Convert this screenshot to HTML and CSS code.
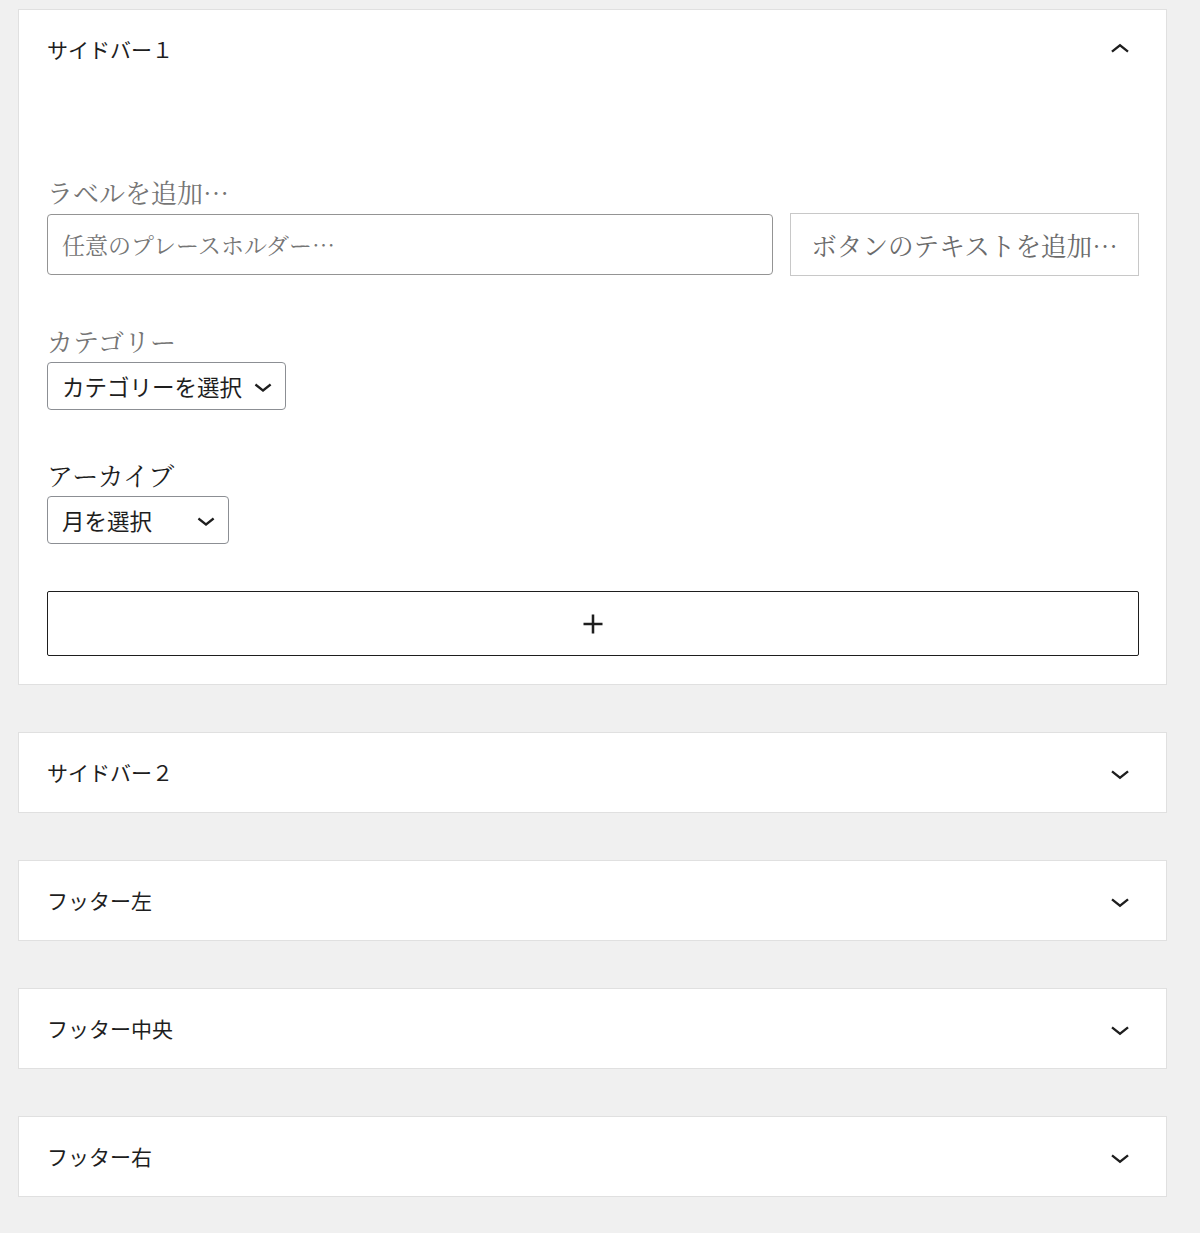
FILE: index.html
```html
<!DOCTYPE html>
<html lang="ja">
  <head>
    <meta charset="utf-8" />
    <title>ウィジェット</title>
    <meta name="viewport" content="width=device-width,initial-scale=1" />
    <link rel="stylesheet" href="styles.css">
  </head>
  <body>
    <div class="w-areas">
      <!-- Open widget area -->
      <section class="w-panel w-panel--open">
        <div class="w-panel__head">
          <h2 class="w-panel__title">サイドバー１</h2>
          <svg class="w-panel__icon" viewBox="0 0 24 24"><path d="M6.5 12.4L12 8l5.5 4.4-.9 1.2L12 10l-4.6 3.6-1-1.2z"/></svg>
        </div>
        <div class="w-panel__body">
          <div class="w-block w-search">
            <div class="w-label w-label--muted">ラベルを追加…</div>
            <div class="w-search__row">
              <div class="w-search__input">任意のプレースホルダー…</div>
              <div class="w-search__button">ボタンのテキストを追加…</div>
            </div>
          </div>

          <div class="w-block">
            <div class="w-label w-label--muted">カテゴリー</div>
            <div class="w-select w-select--cats">
              <span>カテゴリーを選択</span>
              <svg viewBox="0 0 24 24"><path d="M17.5 11.6L12 16l-5.5-4.4.9-1.2L12 14l4.6-3.6 1 1.2z"/></svg>
            </div>
          </div>

          <div class="w-block">
            <div class="w-label">アーカイブ</div>
            <div class="w-select w-select--months">
              <span>月を選択</span>
              <svg viewBox="0 0 24 24"><path d="M17.5 11.6L12 16l-5.5-4.4.9-1.2L12 14l4.6-3.6 1 1.2z"/></svg>
            </div>
          </div>

          <div class="w-block">
            <div class="w-add">
              <svg viewBox="0 0 24 24"><path d="M18 11.2h-5.2V6h-1.6v5.2H6v1.6h5.2V18h1.6v-5.2H18z"/></svg>
            </div>
          </div>
        </div>
      </section>

      <!-- Collapsed widget areas -->
      <section class="w-panel">
        <div class="w-panel__head">
          <h2 class="w-panel__title">サイドバー２</h2>
          <svg class="w-panel__icon" viewBox="0 0 24 24"><path d="M17.5 11.6L12 16l-5.5-4.4.9-1.2L12 14l4.6-3.6 1 1.2z"/></svg>
        </div>
      </section>
      <section class="w-panel">
        <div class="w-panel__head">
          <h2 class="w-panel__title">フッター左</h2>
          <svg class="w-panel__icon" viewBox="0 0 24 24"><path d="M17.5 11.6L12 16l-5.5-4.4.9-1.2L12 14l4.6-3.6 1 1.2z"/></svg>
        </div>
      </section>
      <section class="w-panel">
        <div class="w-panel__head">
          <h2 class="w-panel__title">フッター中央</h2>
          <svg class="w-panel__icon" viewBox="0 0 24 24"><path d="M17.5 11.6L12 16l-5.5-4.4.9-1.2L12 14l4.6-3.6 1 1.2z"/></svg>
        </div>
      </section>
      <section class="w-panel">
        <div class="w-panel__head">
          <h2 class="w-panel__title">フッター右</h2>
          <svg class="w-panel__icon" viewBox="0 0 24 24"><path d="M17.5 11.6L12 16l-5.5-4.4.9-1.2L12 14l4.6-3.6 1 1.2z"/></svg>
        </div>
      </section>
    </div>
  </body>
</html>
```

FILE: styles.css
```css
/* Base */
html { box-sizing: border-box; }
*, *:before, *:after { box-sizing: inherit; }
body {
  margin: 0;
  background-color: #f0f0f0;
  color: #1e1e1e;
  font-family: "Noto Sans CJK JP", "Noto Sans", sans-serif;
}
/* Widget areas */
.w-areas {
  display: flex;
  flex-direction: column;
  gap: 47px;
  padding: 9px 33px 40px 18px;
}
.w-panel {
  background-color: #fff;
  border: 1px solid #e0e0e0;
}
.w-panel__head {
  display: flex;
  align-items: center;
  justify-content: space-between;
  height: 79px;
  padding: 0 27px 0 28px;
}
.w-panel__title {
  margin: 0;
  font-size: 21px;
  font-weight: 400;
  line-height: 1;
}
.w-panel__icon {
  width: 38px;
  height: 38px;
  fill: #1e1e1e;
}
.w-panel__body {
  padding: 85px 27px 28px 28px;
}
/* Blocks */
.w-block + .w-block { margin-top: 47px; }
.w-label {
  font-family: "Noto Serif CJK JP", "Noto Sans CJK JP", serif;
  font-size: 26px;
  line-height: 36px;
  color: #1e1e1e;
  margin-bottom: 3px;
}
.w-label--muted { color: #757575; }
/* Search */
.w-search__row {
  display: flex;
  align-items: center;
  gap: 17px;
}
.w-search__input {
  flex: 1;
  height: 61px;
  display: flex;
  align-items: center;
  padding: 0 14px;
  border: 1px solid #949494;
  border-radius: 4px;
  font-family: "Noto Serif CJK JP", "Noto Sans CJK JP", serif;
  font-size: 23px;
  color: #757575;
}
.w-search__button {
  width: 349px;
  height: 63px;
  display: flex;
  align-items: center;
  justify-content: center;
  border: 1px solid #c8c8c8;
  font-family: "Noto Serif CJK JP", "Noto Sans CJK JP", serif;
  font-size: 25.6px;
  color: #6b6b6b;
  white-space: nowrap;
}
/* Selects */
.w-select {
  display: flex;
  align-items: center;
  justify-content: space-between;
  height: 48px;
  padding: 0 4px 0 14px;
  border: 1px solid #8c8f94;
  border-radius: 4px;
  font-size: 22.5px;
  color: #1e1e1e;
}
.w-select--cats { width: 239px; }
.w-select--months { width: 182px; }
.w-select svg {
  width: 36px;
  height: 36px;
  fill: #1e1e1e;
}
/* Add block */
.w-add {
  display: flex;
  align-items: center;
  justify-content: center;
  height: 65px;
  border: 1.5px solid #1e1e1e;
  border-radius: 2px;
}
.w-add svg {
  width: 38px;
  height: 38px;
  fill: #1e1e1e;
}
```
